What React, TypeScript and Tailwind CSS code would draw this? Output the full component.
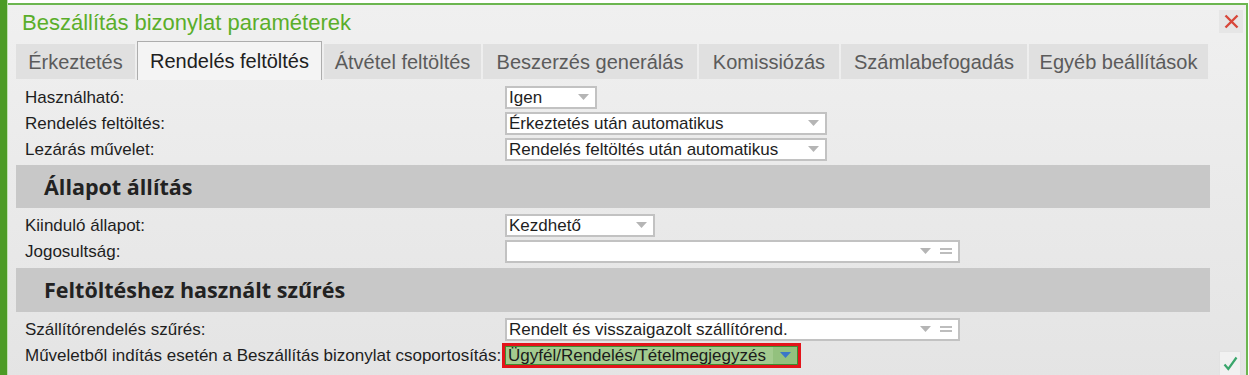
import React from 'react';

const tabs = [
  { label: 'Érkeztetés', w: 'w-[119px]' },
  { label: 'Rendelés feltöltés', w: 'w-[185px]', active: true },
  { label: 'Átvétel feltöltés', w: 'w-[157px]' },
  { label: 'Beszerzés generálás', w: 'w-[214px]' },
  { label: 'Komissiózás', w: 'w-[140px]' },
  { label: 'Számlabefogadás', w: 'w-[186px]' },
  { label: 'Egyéb beállítások', w: 'w-[179px]' },
];

const Caret = ({ color = '#b5b5b5' }: { color?: string }) => (
  <svg width="11" height="7" viewBox="0 0 11 7" className="shrink-0">
    <path d="M0 0h11L5.5 6z" fill={color} />
  </svg>
);

const Equals = () => (
  <svg width="12" height="8" viewBox="0 0 12 8" className="shrink-0">
    <rect x="0" y="1" width="12" height="2" fill="#bdbdbd" />
    <rect x="0" y="5" width="12" height="2" fill="#bdbdbd" />
  </svg>
);

const Select = ({ value, w, lookup }: { value: string; w: string; lookup?: boolean }) => (
  <div className={`${w} h-[23px] flex items-center bg-white border-2 border-[#c2c2c2] pl-[2px] pr-[6px] gap-[9px]`}>
    <span className="flex-1 whitespace-nowrap leading-[19px] text-[17px] text-[#1e1e1e]">{value}</span>
    <Caret />
    {lookup && <Equals />}
  </div>
);

const Row = ({ label, children, cls = '' }: { label: string; children: React.ReactNode; cls?: string }) => (
  <div className={`h-[26px] flex items-center ${cls}`}>
    <div className="w-[489px] pl-[9px] text-[17px] text-[#1e1e1e] leading-none">{label}</div>
    {children}
  </div>
);

const Section = ({ title, cls }: { title: string; cls: string }) => (
  <div className={`w-[1194px] bg-[#c8c8c8] flex items-center pl-[28px] ${cls}`}>
    <span className="font-['Open_Sans',sans-serif] font-bold text-[21.5px] text-[#222] leading-none">{title}</span>
  </div>
);

export default function App() {
  return (
    <div className="w-[1249px] h-[375px] bg-white overflow-hidden font-['Liberation_Sans',Arial,sans-serif]">
      <div className="relative h-[378px] w-[1248px] mt-[3px] border-t-2 border-r-2 border-[#6cb650] flex">
        <div className="w-[7px] -mt-[5px] bg-[#4c9b25]" />
        <div className="w-px -mt-[5px] bg-[#bfe0b0]" />
        <div className="flex-1 bg-gradient-to-b from-[#f0f0f0] to-[#e4e4e4] pl-[8px]">
          <div className="h-[36px] flex items-center pl-[6px] justify-between">
            <span className="text-[22px] text-[#5aae2a] leading-none">Beszállítás bizonylat paraméterek</span>
            <div className="w-[24px] h-[23px] mr-[3px] -mt-[3px] bg-[#e6e6e6] flex items-center justify-center">
              <svg width="15" height="15" viewBox="0 0 15 15">
                <path d="M1.5 1.5l12 12M13.5 1.5l-12 12" stroke="#d8473a" strokeWidth="2.4" />
              </svg>
            </div>
          </div>
          <div className="flex items-end gap-[2px] h-[39px]">
            {tabs.map((t) =>
              t.active ? (
                <div
                  key={t.label}
                  className={`${t.w} h-[39px] bg-[#f4f4f4] border border-b-0 border-[#adadad] flex items-center justify-center text-[20px] text-[#202020] leading-none`}
                >
                  {t.label}
                </div>
              ) : (
                <div
                  key={t.label}
                  className={`${t.w} h-[35px] mb-px bg-[#e0e0e0] flex items-center justify-center text-[20px] text-[#5b5b5b] leading-none`}
                >
                  {t.label}
                </div>
              )
            )}
          </div>

          <div className="mt-[4px]">
            <Row label="Használható:">
              <Select value="Igen" w="w-[92px]" />
            </Row>
            <Row label="Rendelés feltöltés:">
              <Select value="Érkeztetés után automatikus" w="w-[322px]" />
            </Row>
            <Row label="Lezárás művelet:">
              <Select value="Rendelés feltöltés után automatikus" w="w-[322px]" />
            </Row>
            <Section title="Állapot állítás" cls="h-[43px] mt-[3px]" />
            <Row label="Kiinduló állapot:" cls="mt-[4px]">
              <Select value="Kezdhető" w="w-[150px]" />
            </Row>
            <Row label="Jogosultság:">
              <Select value="" w="w-[455px]" lookup />
            </Row>
            <Section title="Feltöltéshez használt szűrés" cls="h-[44px] mt-[4px]" />
            <Row label="Szállítórendelés szűrés:" cls="mt-[4px]">
              <Select value="Rendelt és visszaigazolt szállítórend." w="w-[455px]" lookup />
            </Row>
            <div className="h-[26px] flex items-center">
              <div className="w-[486px] pl-[9px] text-[17px] text-[#1e1e1e] leading-none">
                Műveletből indítás esetén a Beszállítás bizonylat csoportosítás:
              </div>
              <div className="w-[299px] h-[25px] border-[3px] border-[#e3141b] flex">
                <div className="flex-1 flex items-center border border-[#3f8d2f] bg-[#a3cb8f]">
                  <span className="flex-1 pl-[2px] whitespace-nowrap text-[17px] text-[#1b1b1b] leading-none">Ügyfél/Rendelés/Tételmegjegyzés</span>
                  <div className="w-[24px] h-full bg-[#93c17e] flex items-center justify-center">
                    <Caret color="#3a77c7" />
                  </div>
                </div>
              </div>
            </div>
          </div>

          <div className="absolute right-[5px] bottom-[5px] w-[22px] h-[25px] bg-[#f1f1f1] border border-[#e2e2e2] flex items-center justify-center">
            <svg width="15" height="15" viewBox="0 0 15 15">
              <path d="M1.5 8.5l3.8 4.5L13.5 1.5" stroke="#3aa66c" strokeWidth="2.2" fill="none" />
            </svg>
          </div>
        </div>
      </div>
    </div>
  );
}
